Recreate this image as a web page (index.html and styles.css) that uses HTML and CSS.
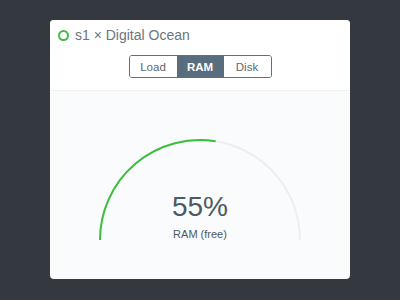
FILE: index.html
```html
<!DOCTYPE html>
<html lang="en">
<head>
  <meta charset="UTF-8" />
  <title>s1 - Digital Ocean</title>
  <link rel="stylesheet" href="styles.css">
</head>
<body>
  <div class="card">
    <div class="card-head">
      <div class="title">
        <span class="status"></span>
        <span>s1 × Digital Ocean</span>
      </div>
      <div class="tabs">
        <button class="tab">Load</button>
        <button class="tab active">RAM</button>
        <button class="tab">Disk</button>
      </div>
    </div>
    <div class="card-body">
      <div class="gauge">
        <svg width="204" height="104" viewBox="0 0 204 104">
          <path d="M 2 102 A 100 100 0 0 1 202 102" fill="none" stroke="#eceef1" stroke-width="2" />
          <path d="M 2 102 A 100 100 0 0 1 117.64 3.23" fill="none" stroke="#3cbf3c" stroke-width="2" />
        </svg>
        <div class="value">55%</div>
        <div class="label">RAM (free)</div>
      </div>
    </div>
  </div>
</body>
</html>
```

FILE: styles.css
```css
body {
  margin: 0;
  background: #33393f;
  font-family: "Liberation Sans", Arial, sans-serif;
}
.card {
  width: 300px;
  height: 259px;
  margin: 20px 0 0 50px;
  background: #f9fbfd;
  border-radius: 4px;
  overflow: hidden;
  display: flex;
  flex-direction: column;
}
.card-head {
  background: #fff;
  height: 71px;
  border-bottom: 1px solid #eef0f2;
  padding: 7px 8px 0;
  box-sizing: border-box;
}
.title {
  display: flex;
  align-items: center;
  gap: 6px;
  font-size: 14px;
  color: #6d757e;
  height: 16px;
}
.status {
  width: 7px;
  height: 7px;
  border: 2px solid #3cbf3c;
  border-radius: 50%;
}
.tabs {
  display: flex;
  width: 143px;
  margin: 12px auto 0;
  border: 1px solid #5f6f7d;
  border-radius: 3px;
  overflow: hidden;
  box-sizing: border-box;
}
.tab {
  height: 21px;
  border: 0;
  background: #fff;
  color: #5d6770;
  font-family: inherit;
  font-size: 11.5px;
  padding: 0;
  flex: 1;
}
.tab.active {
  background: #5a6d7e;
  color: #fff;
  font-weight: bold;
}
.card-body {
  flex: 1;
  display: flex;
  justify-content: center;
  padding-top: 47px;
}
.gauge {
  position: relative;
  width: 204px;
  height: 104px;
}
.gauge svg {
  display: block;
}
.value {
  position: absolute;
  left: 0;
  right: 0;
  top: 55px;
  text-align: center;
  font-size: 28px;
  line-height: 1;
  color: #4d5964;
}
.label {
  position: absolute;
  left: 0;
  right: 0;
  top: 91px;
  text-align: center;
  font-size: 11px;
  line-height: 1;
  color: #4d5964;
}
```
